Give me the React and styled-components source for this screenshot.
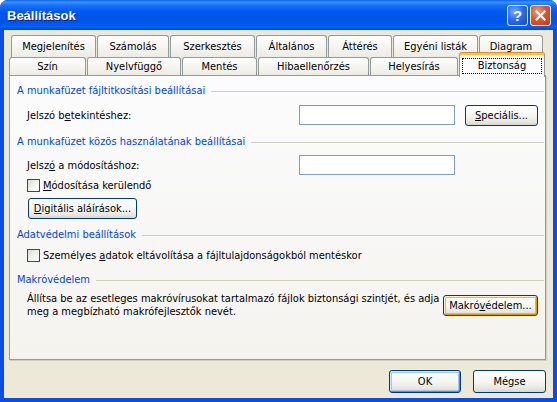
import React from 'react'
import styled, { createGlobalStyle } from 'styled-components'

const GlobalStyle = createGlobalStyle`
  html, body { margin: 0; padding: 0; background: #ffffff; }
  body {
    font-family: "DejaVu Sans Condensed", "Liberation Sans", sans-serif;
    font-size: 11px;
    color: #000;
  }
`

const Window = styled.div`
  width: 557px;
  height: 402px;
  display: flex;
  flex-direction: column;
  background: #0A4DE4;
  border-radius: 8px 8px 0 0;
  overflow: hidden;
`

const TitleBar = styled.div`
  height: 30px;
  flex: none;
  display: flex;
  align-items: center;
  padding: 0 6px 0 7px;
  background: linear-gradient(180deg, #0A5FF2 0%, #3D95FF 7%, #1A72FC 16%, #0058EE 40%, #0054E6 75%, #0062F8 90%, #0048DA 100%);
`

const Title = styled.div`
  flex: 1;
  font-family: "Liberation Sans", sans-serif;
  font-weight: bold;
  font-size: 13px;
  color: #fff;
  text-shadow: 1px 1px 0 #0A1E8C;
`

const TitleButton = styled.div`
  width: 21px;
  height: 21px;
  box-sizing: border-box;
  margin-left: 2px;
  border: 1px solid #fff;
  border-radius: 3px;
  display: flex;
  align-items: center;
  justify-content: center;
  font-family: "Liberation Sans", sans-serif;
  font-weight: bold;
  font-size: 15px;
  color: #fff;
  background: ${p => p.$kind === 'close'
    ? 'radial-gradient(circle at 35% 30%, #F39A7A 0%, #E2552A 45%, #C6380E 100%)'
    : 'radial-gradient(circle at 35% 30%, #7FA9FB 0%, #2D6BF2 45%, #1447D6 100%)'};
`

const Frame = styled.div`
  flex: 1;
  margin: 0 4px 4px;
  background: #ECE9D8;
  display: flex;
  flex-direction: column;
  padding-top: 5px;
`

const TabStrip = styled.div`
  height: 40px;
  flex: none;
  display: flex;
  flex-direction: column;
`

const TabRow = styled.div`
  display: flex;
  padding-left: ${p => p.$indent}px;
  height: ${p => p.$h}px;
`

const Tab = styled.div`
  width: ${p => p.$w - 1}px;
  margin-right: 1px;
  box-sizing: border-box;
  flex: none;
  border: 1px solid #919B9C;
  border-bottom: none;
  border-radius: 3px 3px 0 0;
  background: linear-gradient(180deg, #FFFFFF 0%, #F6F5F1 50%, #ECEBE5 100%);
  text-align: center;
  padding-top: ${p => p.$top}px;
  line-height: 14px;
  white-space: nowrap;
`

const ActiveTab = styled.div`
  width: ${p => p.$w}px;
  height: 25px;
  margin-top: -5px;
  position: relative;
  z-index: 1;
  box-sizing: border-box;
  flex: none;
  border: 1px solid #919B9C;
  border-top: 1px solid #E68B2C;
  border-bottom: none;
  border-radius: 3px 3px 0 0;
  background: #FCFCFE;
  box-shadow: inset 0 2px 0 #FFC83C;
  display: flex;
  justify-content: center;
  padding-top: 5px;
`

const FocusRect = styled.span`
  display: block;
  width: 78px;
  height: 14px;
  line-height: 13px;
  border: 1px dotted #000;
  text-align: center;
`

const Panel = styled.div`
  height: 285px;
  flex: none;
  margin: 0 7px 0 5px;
  box-sizing: border-box;
  border: 1px solid #919B9C;
  background: linear-gradient(180deg, #FCFCFE 0%, #F4F3EE 100%);
  box-shadow: 1px 1px 0 #D0CEBF;
  padding: 8px 1px 0 7px;
  display: flex;
  flex-direction: column;
`

const GroupHeader = styled.div`
  display: flex;
  align-items: center;
  height: 14px;
  line-height: 14px;
  color: #0046D5;
  margin-top: ${p => p.$mt || 0}px;
  white-space: nowrap;

  &::after {
    content: '';
    flex: 1;
    height: 1px;
    margin-left: 6px;
    background: #D0D0BF;
  }
`

const FieldRow = styled.div`
  display: flex;
  align-items: center;
  height: ${p => p.$h || 22}px;
  margin-top: ${p => p.$mt || 0}px;
  padding-left: 10px;
`

const Label = styled.div`
  width: 272px;
  flex: none;
`

const TextInput = styled.div`
  width: 156px;
  height: 20px;
  box-sizing: border-box;
  border: 1px solid #7F9DB9;
  background: #fff;
  flex: none;
`

const Button = styled.div`
  width: ${p => p.$w}px;
  height: ${p => p.$h || 21}px;
  box-sizing: border-box;
  flex: none;
  margin-left: ${p => p.$ml || 0}px;
  border: 1px solid #003C74;
  border-radius: 3px;
  background: linear-gradient(180deg, #FFFFFF 0%, #F5F5F1 55%, #E6E5DE 85%, #D8D6CC 100%);
  box-shadow: ${p => p.$variant === 'default'
    ? 'inset 1px 1px 0 #CEE7FF, inset -1px -1px 0 #6982EE, inset 0 0 0 2px #A8C3F4'
    : p.$variant === 'hot'
      ? 'inset 1px 1px 0 #FFF0CF, inset -1px -1px 0 #E59700, inset 0 0 0 2px #F8B330'
      : 'none'};
  display: flex;
  align-items: center;
  justify-content: center;
  white-space: nowrap;
`

const CheckRow = styled.div`
  display: flex;
  align-items: center;
  height: 16px;
  margin-top: ${p => p.$mt || 0}px;
  padding-left: 10px;
`

const Check = styled.span`
  width: 13px;
  height: 13px;
  box-sizing: border-box;
  border: 1px solid #1C5180;
  background: linear-gradient(135deg, #DCDCD7 0%, #F4F4F0 60%, #FFFFFF 100%);
  margin-right: 3px;
  flex: none;
`

const Indented = styled.div`
  padding-left: 11px;
  margin-top: ${p => p.$mt || 0}px;
  display: flex;
`

const MacroRow = styled.div`
  display: flex;
  align-items: center;
  height: 22px;
  margin-top: 7px;
  padding: 0 6px 0 10px;
`

const Para = styled.div`
  flex: 1;
  line-height: 13px;
`

const Footer = styled.div`
  display: flex;
  justify-content: flex-end;
  gap: 12px;
  margin-top: 10px;
  padding-right: 7px;
`

const U = styled.span`
  text-decoration: underline;
`

const rowOne = [
  ['Megjelenítés', 86], ['Számolás', 73], ['Szerkesztés', 86], ['Általános', 72],
  ['Áttérés', 65], ['Egyéni listák', 86], ['Diagram', 65],
]

const rowTwo = [
  ['Szín', 78], ['Nyelvfüggő', 95], ['Mentés', 76], ['Hibaellenőrzés', 112], ['Helyesírás', 89],
]

function CloseGlyph() {
  return (
    <svg width="11" height="11" viewBox="0 0 11 11">
      <path d="M1.5 1.5 L9.5 9.5 M9.5 1.5 L1.5 9.5" stroke="#fff" strokeWidth="2.2" strokeLinecap="square" />
    </svg>
  )
}

export default function App() {
  return (
    <>
      <GlobalStyle />
      <Window>
        <TitleBar>
          <Title>Beállítások</Title>
          <TitleButton $kind="help">?</TitleButton>
          <TitleButton $kind="close"><CloseGlyph /></TitleButton>
        </TitleBar>
        <Frame>
          <TabStrip>
            <TabRow $indent={7} $h={22}>
              {rowOne.map(([t, w]) => <Tab key={t} $w={w} $top={4}>{t}</Tab>)}
            </TabRow>
            <TabRow $indent={5} $h={18}>
              {rowTwo.map(([t, w]) => <Tab key={t} $w={w} $top={2}>{t}</Tab>)}
              <ActiveTab $w={86}><FocusRect>Biztonság</FocusRect></ActiveTab>
            </TabRow>
          </TabStrip>
          <Panel>
            <GroupHeader>A munkafüzet fájltitkosítási beállításai</GroupHeader>
            <FieldRow $mt={6}>
              <Label>Jelszó b<U>e</U>tekintéshez:</Label>
              <TextInput />
              <Button $w={73} $ml={10}><U>S</U>peciális...</Button>
            </FieldRow>
            <GroupHeader $mt={9}>A munkafüzet közös használatának beállításai</GroupHeader>
            <FieldRow $mt={6} $h={20}>
              <Label>Jelsz<U>ó</U> a módosításhoz:</Label>
              <TextInput />
            </FieldRow>
            <CheckRow $mt={2}>
              <Check /><span><U>M</U>ódosítása kerülendő</span>
            </CheckRow>
            <Indented $mt={5}>
              <Button $w={109}><U>D</U>igitális aláírások...</Button>
            </Indented>
            <GroupHeader $mt={9}>Adatvédelmi beállítások</GroupHeader>
            <CheckRow $mt={5}>
              <Check /><span>Személyes <U>a</U>datok eltávolítása a fájltulajdonságokból mentéskor</span>
            </CheckRow>
            <GroupHeader $mt={10}>Makróvédelem</GroupHeader>
            <MacroRow>
              <Para>
                Állítsa be az esetleges makróvírusokat tartalmazó fájlok biztonsági szintjét, és adja
                <br />
                meg a megbízható makrófejlesztők nevét.
              </Para>
              <Button $w={95} $variant="hot">Makró<U>v</U>édelem...</Button>
            </MacroRow>
          </Panel>
          <Footer>
            <Button $w={72} $h={23} $variant="default">OK</Button>
            <Button $w={73} $h={23}>Mégse</Button>
          </Footer>
        </Frame>
      </Window>
    </>
  )
}
